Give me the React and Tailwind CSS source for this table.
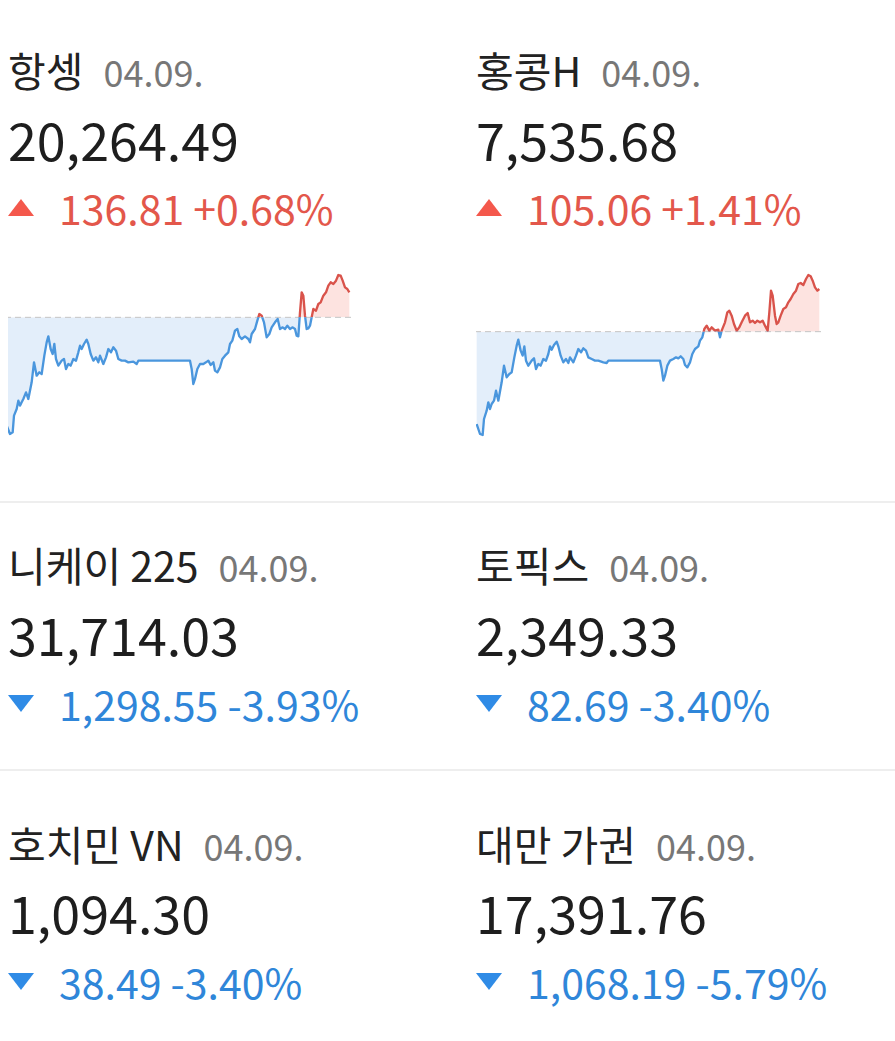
import React, { useId } from 'react';

const chart1 = [
  [20,500],[30,525],[38,520],[42,470],[50,450],[55,425],[60,440],[65,430],[70,420],[78,400],[85,420],[95,370],[102,310],[110,350],[118,340],[125,345],[133,290],[140,250],[145,232],[152,270],[158,285],[163,255],[168,300],[175,320],[185,305],[192,300],[198,330],[205,315],[212,320],[220,300],[228,305],[235,280],[240,260],[245,270],[252,255],[260,242],[265,255],[272,285],[280,305],[288,295],[295,310],[300,290],[310,315],[318,295],[325,270],[333,280],[340,265],[348,275],[355,300],[365,305],[375,305],[385,310],[400,308],[410,315],[415,305],[570,305],[575,330],[580,375],[585,360],[592,330],[600,315],[610,315],[618,310],[625,305],[632,318],[640,310],[645,335],[652,340],[660,325],[667,300],[675,290],[685,280],[690,255],[697,245],[705,215],[712,210],[718,232],[725,240],[735,232],[745,240],[750,250],[755,225],[765,210],[772,185],[778,165],[785,170],[792,190],[800,235],[808,225],[815,205],[825,190],[833,180],[840,210],[848,205],[855,210],[862,200],[870,210],[878,205],[885,210],[890,230],[895,232],[900,160],[905,100],[910,110],[915,170],[920,210],[925,208],[930,200],[935,175],[940,150],[948,155],[955,135],[962,130],[970,110],[978,100],[985,80],[992,70],[1000,75],[1008,65],[1015,48],[1022,50],[1028,65],[1035,85],[1042,90],[1048,100]
];

const chart2 = [
  [20,495],[30,525],[38,528],[42,480],[50,455],[55,430],[60,450],[65,435],[72,425],[78,395],[85,425],[95,370],[102,320],[110,355],[118,345],[125,340],[133,295],[140,260],[145,242],[152,275],[158,290],[163,262],[168,305],[175,320],[185,305],[192,298],[198,330],[205,315],[212,320],[220,300],[228,305],[235,285],[240,262],[245,272],[252,258],[260,248],[265,262],[272,290],[280,310],[288,300],[295,312],[300,295],[310,310],[318,290],[325,270],[333,280],[340,268],[348,275],[355,295],[365,300],[375,305],[385,305],[400,310],[410,312],[415,305],[570,305],[575,330],[580,365],[585,350],[592,320],[600,305],[610,300],[618,295],[625,298],[632,292],[640,300],[645,318],[652,325],[660,310],[667,285],[675,270],[685,262],[690,245],[697,235],[703,210],[710,200],[718,215],[725,205],[735,215],[745,212],[750,235],[755,215],[765,190],[772,160],[778,155],[785,170],[792,195],[800,215],[808,205],[815,190],[825,170],[833,162],[840,190],[848,185],[855,192],[862,185],[870,190],[878,185],[885,200],[893,215],[898,160],[903,95],[908,110],[915,170],[920,195],[925,190],[932,170],[940,150],[948,145],[955,130],[962,120],[970,105],[978,95],[985,75],[992,72],[1000,78],[1008,60],[1015,48],[1022,52],[1028,65],[1035,85],[1042,95],[1048,90]
];

function Chart({ data, base, shift }) {
  const id = useId().replace(/:/g, '');
  const line = data.map(p => p.join(',')).join(' ');
  const first = data[0][0];
  const last = data[data.length - 1][0];
  const area = `${first},${base} ${line} ${last},${base}`;
  return (
    <svg width="360" height="190" viewBox={`${shift} 0 1080 570`} className="block">
      <defs>
        <clipPath id={`up${id}`}><rect x="0" y="0" width="1200" height={base} /></clipPath>
        <clipPath id={`dn${id}`}><rect x="0" y={base} width="1200" height={570 - base} /></clipPath>
      </defs>
      <polygon points={area} fill="#fde3e0" clipPath={`url(#up${id})`} />
      <polygon points={area} fill="#e3eefa" clipPath={`url(#dn${id})`} />
      <line x1="15" y1={base} x2="1055" y2={base} stroke="#c4c4c4" strokeWidth="3" strokeDasharray="18 12" />
      <polyline points={line} fill="none" stroke="#d9534b" strokeWidth="7" strokeLinejoin="round" clipPath={`url(#up${id})`} />
      <polyline points={line} fill="none" stroke="#4a96dd" strokeWidth="7" strokeLinejoin="round" clipPath={`url(#dn${id})`} />
    </svg>
  );
}

function Up() {
  return <span className="block w-0 h-0 border-l-[13px] border-r-[13px] border-b-[17px] border-l-transparent border-r-transparent border-b-[#f4584c]" />;
}

function Down() {
  return <span className="block w-0 h-0 border-l-[13px] border-r-[13px] border-t-[17px] border-l-transparent border-r-transparent border-t-[#2f8be6]" />;
}

function Index({ name, date, price, change, up, gap = 'mt-[19px]', gap2 = 'mt-[19px]' }) {
  return (
    <div className="px-2">
      <div className="flex items-baseline">
        <span className="text-[41px] leading-[42px] text-[#222]">{name}</span>
        <span className="ml-[20px] text-[36px] leading-[42px] text-[#777]">{date}</span>
      </div>
      <div className={`${gap} text-[52px] leading-[56px] text-[#1e1e1e]`}>{price}</div>
      <div className={`${gap2} flex items-center h-[44px]`}>
        {up ? <Up /> : <Down />}
        <span className={`ml-[25px] text-[41px] leading-[44px] ${up ? 'text-[#e3574b]' : 'text-[#2f86d9]'}`}>{change}</span>
      </div>
    </div>
  );
}

export default function App() {
  return (
    <div className="w-[895px] h-[1041px] overflow-hidden bg-white font-['Noto_Sans_CJK_KR','Noto_Sans',sans-serif]">
      <div className="grid grid-cols-[468px_1fr] pt-[48px] pb-[52px]">
        <div>
          <Index name="항셍" date="04.09." price="20,264.49" change="136.81 +0.68%" up gap2="mt-[18px]" />
          <div className="mt-[30px] pl-2"><Chart data={chart1} base={175} shift={24} /></div>
        </div>
        <div>
          <Index name="홍콩H" date="04.09." price="7,535.68" change="105.06 +1.41%" up gap2="mt-[18px]" />
          <div className="mt-[30px] pl-2"><Chart data={chart2} base={218} shift={18} /></div>
        </div>
      </div>
      <div className="h-[2px] bg-[#eeeeee]" />
      <div className="grid grid-cols-[468px_1fr] pt-[40px] pb-[44px]">
        <Index name="니케이 225" date="04.09." price="31,714.03" change="1,298.55 -3.93%" />
        <Index name="토픽스" date="04.09." price="2,349.33" change="82.69 -3.40%" />
      </div>
      <div className="h-[2px] bg-[#eeeeee]" />
      <div className="grid grid-cols-[468px_1fr] pt-[51px]">
        <Index name="호치민 VN" date="04.09." price="1,094.30" change="38.49 -3.40%" gap="mt-[18px]" />
        <Index name="대만 가권" date="04.09." price="17,391.76" change="1,068.19 -5.79%" gap="mt-[18px]" />
      </div>
    </div>
  );
}
